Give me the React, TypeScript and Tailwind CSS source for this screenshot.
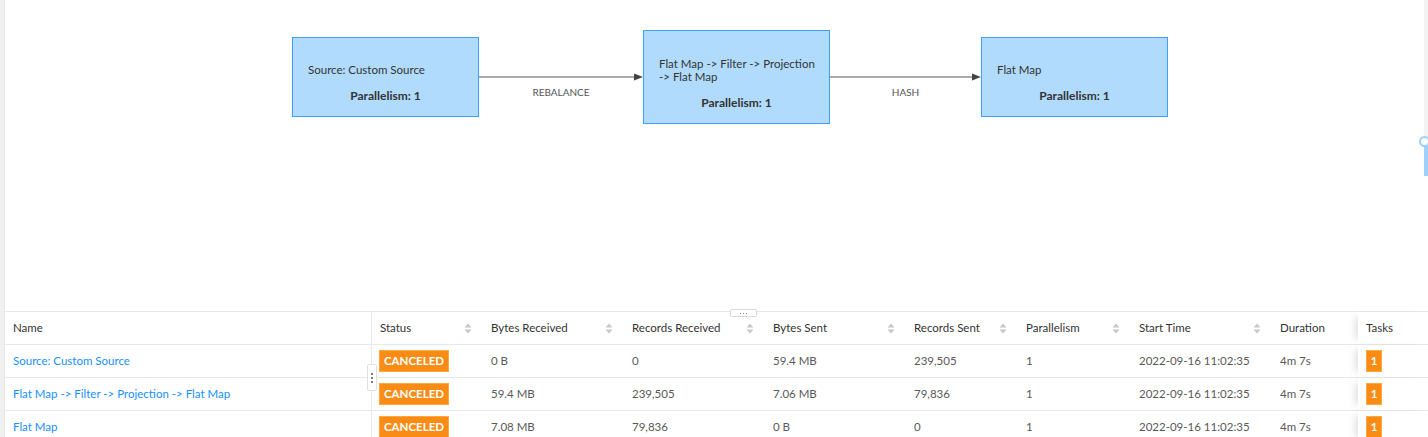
import React from "react";

const cols = [
  { key: "name", label: "Name", w: 367, sort: false },
  { key: "status", label: "Status", w: 111, sort: true },
  { key: "br", label: "Bytes Received", w: 141, sort: true },
  { key: "rr", label: "Records Received", w: 141, sort: true },
  { key: "bs", label: "Bytes Sent", w: 141, sort: true },
  { key: "rs", label: "Records Sent", w: 112, sort: true },
  { key: "par", label: "Parallelism", w: 113, sort: true },
  { key: "st", label: "Start Time", w: 141, sort: true },
  { key: "dur", label: "Duration", w: 86, sort: false },
  { key: "tasks", label: "Tasks", w: 70, sort: false },
];

const rows = [
  { name: "Source: Custom Source", br: "0 B", rr: "0", bs: "59.4 MB", rs: "239,505" },
  { name: "Flat Map -> Filter -> Projection -> Flat Map", br: "59.4 MB", rr: "239,505", bs: "7.06 MB", rs: "79,836" },
  { name: "Flat Map", br: "7.08 MB", rr: "79,836", bs: "0 B", rs: "0" },
];

function SortIcon() {
  return (
    <svg width="8" height="11" viewBox="0 0 8 11" className="shrink-0">
      <path d="M4 0.5 L7.5 4.5 L0.5 4.5 Z" fill="#c8c8c8" />
      <path d="M4 10.5 L7.5 6.5 L0.5 6.5 Z" fill="#c8c8c8" />
    </svg>
  );
}

function Node({ lines, top, height, left }: { lines: string[]; top: number; height: number; left: number }) {
  return (
    <div
      className="absolute flex flex-col justify-center border border-[#3fa0ff] bg-[#b1dbfd] text-[#333] text-[11.5px] leading-[13px] pl-[15px] pr-[4px] pt-[11px]"
      style={{ top, left, width: 187, height }}
    >
      <div>
        {lines.map((l) => (
          <div key={l} className="whitespace-nowrap">{l}</div>
        ))}
      </div>
      <div className="mt-[13px] font-bold text-center -ml-[11px] text-[12px]">Parallelism: 1</div>
    </div>
  );
}

function Edge({ x1, x2, y, label }: { x1: number; x2: number; y: number; label: string }) {
  return (
    <>
      <svg className="absolute" style={{ left: x1, top: y - 5 }} width={x2 - x1} height={10}>
        <line x1={0} y1={5} x2={x2 - x1 - 8} y2={5} stroke="#555" strokeWidth={1} />
        <path d={`M${x2 - x1 - 9} 1.5 L${x2 - x1} 5 L${x2 - x1 - 9} 8.5 Z`} fill="#444" />
      </svg>
      <div
        className="absolute text-[10px] text-[#555] text-center"
        style={{ left: x1, width: x2 - x1, top: y + 8 }}
      >
        {label}
      </div>
    </>
  );
}

export default function App() {
  const font = { fontFamily: "Lato, 'Open Sans', sans-serif" };
  return (
    <div className="w-[1428px] h-[437px] overflow-hidden bg-white flex" style={font}>
      <div className="w-[5px] shrink-0 bg-[#f0f0f0] border-r border-[#e6e6e6]" />
      <div className="flex-1 flex flex-col relative">
        {/* graph canvas */}
        <div className="relative h-[311px] shrink-0">
          <Node lines={["Source: Custom Source"]} top={37} height={80} left={287} />
          <Node lines={["Flat Map -> Filter -> Projection", "-> Flat Map"]} top={30} height={94} left={638} />
          <Node lines={["Flat Map"]} top={37} height={80} left={976} />
          <Edge x1={474} x2={638} y={77} label="REBALANCE" />
          <Edge x1={825} x2={976} y={77} label="HASH" />
          {/* zoom slider */}
          <div className="absolute left-[1419px] top-0 w-[4px] h-[138px] bg-[#f3f3f3]" />
          <div className="absolute left-[1419px] top-[145px] w-[4px] h-[31px] bg-[#9dd1fb]" />
          <div className="absolute left-[1414px] top-[136px] w-[11px] h-[11px] rounded-full border-2 border-[#9dd1fb] bg-white" />
          {/* split handle */}
          <div className="absolute left-[725px] top-[309px] w-[27px] h-[8px] border border-[#d9d9d9] bg-white rounded-[2px] flex items-center justify-center gap-[2px] z-10">
            <span className="w-[1px] h-[1px] bg-[#888]" />
            <span className="w-[1px] h-[1px] bg-[#888]" />
            <span className="w-[1px] h-[1px] bg-[#888]" />
          </div>
        </div>
        {/* table */}
        <div className="relative border-t border-[#e8e8e8] text-[11.5px]">
          <div className="flex h-[33px] border-b border-[#e8e8e8] text-[#333]">
            {cols.map((c, i) => (
              <div
                key={c.key}
                className={
                  "flex items-center justify-between px-[8px] shrink-0 " +
                  (i === 0 ? "border-r border-[#e8e8e8] " : "") +
                  (c.key === "tasks" ? "shadow-[-7px_0_8px_-5px_rgba(0,0,0,0.15)] bg-white" : "")
                }
                style={{ width: c.w }}
              >
                <span>{c.label}</span>
                {c.sort && <span className="mr-[3px]"><SortIcon /></span>}
              </div>
            ))}
          </div>
          {rows.map((r, ri) => (
            <div key={ri} className="flex h-[33px] border-b border-[#e8e8e8] text-[#595959]">
              <div className="w-[367px] shrink-0 flex items-center px-[8px] border-r border-[#e8e8e8] text-[#1890ff]">
                {r.name}
              </div>
              <div className="w-[111px] shrink-0 flex items-center px-[7px]">
                <span className="bg-[#fa8c16] border border-[#ffa940] text-white font-bold text-[11.5px] h-[22px] px-[4px] flex items-center">
                  CANCELED
                </span>
              </div>
              <div className="w-[141px] shrink-0 flex items-center px-[8px]">{r.br}</div>
              <div className="w-[141px] shrink-0 flex items-center px-[8px]">{r.rr}</div>
              <div className="w-[141px] shrink-0 flex items-center px-[8px]">{r.bs}</div>
              <div className="w-[112px] shrink-0 flex items-center px-[8px]">{r.rs}</div>
              <div className="w-[113px] shrink-0 flex items-center px-[8px]">1</div>
              <div className="w-[141px] shrink-0 flex items-center px-[8px]">2022-09-16 11:02:35</div>
              <div className="w-[86px] shrink-0 flex items-center px-[8px]">4m 7s</div>
              <div className="w-[70px] shrink-0 flex items-center px-[8px] bg-white shadow-[-7px_0_8px_-5px_rgba(0,0,0,0.15)]">
                <span className="bg-[#fa8c16] border border-[#ffa940] text-white font-bold h-[22px] w-[16px] flex items-center justify-center">
                  1
                </span>
              </div>
            </div>
          ))}
          {/* column resize handle */}
          <div className="absolute left-[362px] top-[52px] w-[10px] h-[27px] bg-white border border-[#e0e0e0] rounded-[2px] flex flex-col items-center justify-center gap-[2px]">
            <span className="w-[2px] h-[2px] bg-[#777]" />
            <span className="w-[2px] h-[2px] bg-[#777]" />
            <span className="w-[2px] h-[2px] bg-[#777]" />
          </div>
        </div>
      </div>
    </div>
  );
}
